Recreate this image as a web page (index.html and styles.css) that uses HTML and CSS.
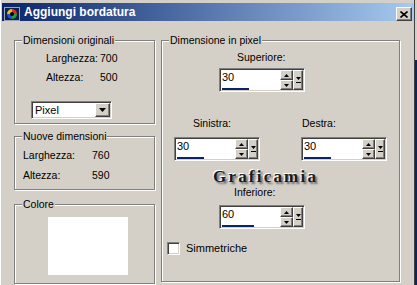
FILE: index.html
```html
<!DOCTYPE html>
<html lang="it">
<head>
  <meta charset="UTF-8">
  <title>Aggiungi bordatura</title>
  <link rel="stylesheet" href="styles.css">
</head>
<body>
  <div class="window">
    <div class="titlebar">
      <svg class="app-icon" width="16" height="14" viewBox="0 0 16 14">
        <rect x="0.5" y="0.5" width="15" height="13" fill="#10204a" stroke="#9aa4b8"/>
        <path d="M8 7 L8 2 A5 5 0 0 1 13 7 Z" fill="#e03020"/>
        <path d="M8 7 L13 7 A5 5 0 0 1 8 12 Z" fill="#20a040"/>
        <path d="M8 7 L8 12 A5 5 0 0 1 3 7 Z" fill="#2050e0"/>
        <path d="M8 7 L3 7 A5 5 0 0 1 8 2 Z" fill="#e0c020"/>
        <circle cx="8" cy="7" r="2" fill="#000"/>
      </svg>
      <span class="title">Aggiungi bordatura</span>
      <span class="close">
        <svg width="8" height="7" viewBox="0 0 8 7"><path d="M0.5 0.5 L7.5 6.5 M7.5 0.5 L0.5 6.5" stroke="#000" stroke-width="1.6"/></svg>
      </span>
    </div>

    <div class="content">
      <div class="col-left">
        <div class="group g-orig">
          <span class="legend">Dimensioni originali</span>
          <div class="dims dims-orig">
            <span>Larghezza:</span><span>700</span>
            <span>Altezza:</span><span>500</span>
          </div>
          <div class="select">
            <span class="select-text">Pixel</span>
            <span class="select-btn">
              <svg width="7" height="4" viewBox="0 0 7 4"><path d="M0 0 H7 L3.5 4 Z" fill="#000"/></svg>
            </span>
          </div>
        </div>

        <div class="group g-new">
          <span class="legend">Nuove dimensioni</span>
          <div class="dims dims-new">
            <span>Larghezza:</span><span>760</span>
            <span>Altezza:</span><span>590</span>
          </div>
        </div>

        <div class="group g-color">
          <span class="legend">Colore</span>
          <div class="swatch"></div>
        </div>
      </div>

      <div class="group g-pixel">
        <span class="legend">Dimensione in pixel</span>

        <div class="spin-block sb-top">
          <span class="spin-label">Superiore:</span>
          <div class="spin">
            <div class="spin-field">
              <span class="spin-value">30</span>
              <div class="spin-bar" style="width: 27px"></div>
            </div>
            <div class="spin-arrows">
              <span class="arrow-btn"><svg width="5" height="3" viewBox="0 0 5 3"><path d="M2.5 0 L5 3 H0 Z" fill="#000"/></svg></span>
              <span class="arrow-btn"><svg width="5" height="3" viewBox="0 0 5 3"><path d="M0 0 H5 L2.5 3 Z" fill="#000"/></svg></span>
            </div>
            <span class="more-btn"><svg width="5" height="6" viewBox="0 0 5 6"><path d="M0 0 H5 L2.5 3 Z M0 5 H5 V6 H0 Z" fill="#000"/></svg></span>
          </div>
        </div>

        <div class="spin-row">
          <div class="spin-block sb-left">
            <span class="spin-label">Sinistra:</span>
            <div class="spin">
              <div class="spin-field">
                <span class="spin-value">30</span>
                <div class="spin-bar" style="width: 27px"></div>
              </div>
              <div class="spin-arrows">
                <span class="arrow-btn"><svg width="5" height="3" viewBox="0 0 5 3"><path d="M2.5 0 L5 3 H0 Z" fill="#000"/></svg></span>
                <span class="arrow-btn"><svg width="5" height="3" viewBox="0 0 5 3"><path d="M0 0 H5 L2.5 3 Z" fill="#000"/></svg></span>
              </div>
              <span class="more-btn"><svg width="5" height="6" viewBox="0 0 5 6"><path d="M0 0 H5 L2.5 3 Z M0 5 H5 V6 H0 Z" fill="#000"/></svg></span>
            </div>
          </div>
          <div class="spin-block sb-right">
            <span class="spin-label">Destra:</span>
            <div class="spin">
              <div class="spin-field">
                <span class="spin-value">30</span>
                <div class="spin-bar" style="width: 27px"></div>
              </div>
              <div class="spin-arrows">
                <span class="arrow-btn"><svg width="5" height="3" viewBox="0 0 5 3"><path d="M2.5 0 L5 3 H0 Z" fill="#000"/></svg></span>
                <span class="arrow-btn"><svg width="5" height="3" viewBox="0 0 5 3"><path d="M0 0 H5 L2.5 3 Z" fill="#000"/></svg></span>
              </div>
              <span class="more-btn"><svg width="5" height="6" viewBox="0 0 5 6"><path d="M0 0 H5 L2.5 3 Z M0 5 H5 V6 H0 Z" fill="#000"/></svg></span>
            </div>
          </div>
        </div>

        <div class="watermark">Graficamia</div>

        <div class="spin-block sb-bottom">
          <span class="spin-label">Inferiore:</span>
          <div class="spin">
            <div class="spin-field">
              <span class="spin-value">60</span>
              <div class="spin-bar" style="width: 32px"></div>
            </div>
            <div class="spin-arrows">
              <span class="arrow-btn"><svg width="5" height="3" viewBox="0 0 5 3"><path d="M2.5 0 L5 3 H0 Z" fill="#000"/></svg></span>
              <span class="arrow-btn"><svg width="5" height="3" viewBox="0 0 5 3"><path d="M0 0 H5 L2.5 3 Z" fill="#000"/></svg></span>
            </div>
            <span class="more-btn"><svg width="5" height="6" viewBox="0 0 5 6"><path d="M0 0 H5 L2.5 3 Z M0 5 H5 V6 H0 Z" fill="#000"/></svg></span>
          </div>
        </div>

        <label class="check-row">
          <span class="checkbox"></span>
          <span>Simmetriche</span>
        </label>
      </div>
    </div>
  </div>
</body>
</html>
```

FILE: styles.css
```css
body {
  margin: 0;
  width: 417px;
  height: 285px;
  overflow: hidden;
  font-family: "Liberation Sans", Arial, sans-serif;
  font-size: 10.5px;
  color: #000;
  background: linear-gradient(to bottom, #d4d0c8 60px, #0a246a 60px);
}
.window {
  box-sizing: border-box;
  width: 415px;
  height: 285px;
  padding-top: 3px;
  background-color: #d4d0c8;
  border-left: 1px solid #fff;
  border-right: 1px solid #404040;
}
.titlebar {
  height: 18px;
  margin-left: 1px;
  display: flex;
  align-items: center;
  background: linear-gradient(to right, #0a246a, #a6caf0);
  color: #fff;
}
.app-icon {
  margin-left: 2px;
  margin-top: 3px;
}
.title {
  margin-left: 4px;
  font-weight: bold;
  font-size: 12px;
  flex-grow: 1;
}
.close {
  box-sizing: border-box;
  width: 16px;
  height: 14px;
  margin-right: 2px;
  margin-top: 4px;
  display: flex;
  align-items: center;
  justify-content: center;
  background-color: #d4d0c8;
  border: 1px solid;
  border-color: #fff #404040 #404040 #fff;
  box-shadow: inset -1px -1px 0 #808080;
}

.content {
  display: flex;
  align-items: flex-start;
  gap: 6px;
  padding: 19px 0 0 13px;
}
.col-left {
  width: 141px;
}
.group {
  position: relative;
  box-sizing: border-box;
  border: 1px solid #808080;
  box-shadow: 1px 1px 0 #fff, inset 1px 1px 0 #fff;
}
.legend {
  position: absolute;
  top: -7px;
  left: 7px;
  padding: 0 1px;
  line-height: 13px;
  background-color: #d4d0c8;
}
.g-orig {
  height: 84px;
}
.g-new {
  height: 54px;
  margin-top: 12px;
}
.g-color {
  height: 80px;
  margin-top: 14px;
}
.g-pixel {
  width: 239px;
  height: 242px;
}

.dims {
  display: grid;
  line-height: 14px;
}
.dims-orig {
  grid-template-columns: 54px auto;
  row-gap: 5px;
  margin: 10px 0 0 31px;
}
.dims-new {
  grid-template-columns: 69px auto;
  row-gap: 6px;
  margin: 11px 0 0 8px;
}

.select {
  box-sizing: border-box;
  width: 81px;
  height: 18px;
  margin: 17px 0 0 16px;
  padding: 1px;
  display: flex;
  background-color: #fff;
  border: 1px solid;
  border-color: #808080 #fff #fff #808080;
  box-shadow: inset 1px 1px 0 #404040, inset -1px -1px 0 #d4d0c8;
}
.select-text {
  flex-grow: 1;
  padding-left: 2px;
  font-size: 11px;
  line-height: 14px;
}
.select-btn,
.arrow-btn,
.more-btn {
  box-sizing: border-box;
  display: flex;
  align-items: center;
  justify-content: center;
  background-color: #d4d0c8;
  border: 1px solid;
  border-color: #fff #404040 #404040 #fff;
  box-shadow: inset -1px -1px 0 #808080;
}
.select-btn {
  width: 15px;
  height: 14px;
}

.swatch {
  width: 80px;
  height: 58px;
  margin: 12px 0 0 33px;
  background-color: #fff;
}

.spin-block {
  display: flex;
  flex-direction: column;
  align-items: flex-start;
  width: 86px;
}
.spin-label {
  line-height: 14px;
}
.sb-top {
  margin: 9px 0 0 57px;
}
.sb-top .spin-label {
  margin-left: 18px;
}
.sb-top .spin {
  margin-top: 4px;
}
.spin-row {
  display: flex;
  gap: 41px;
  margin: 24px 0 0 12px;
}
.sb-left .spin-label {
  margin-left: 19px;
}
.sb-right .spin-label {
  margin-left: 1px;
}
.spin-row .spin {
  margin-top: 7px;
}
.sb-bottom {
  margin-left: 57px;
}
.sb-bottom .spin-label {
  margin-left: 15px;
}
.sb-bottom .spin {
  margin-top: 6px;
}

.spin {
  box-sizing: border-box;
  width: 86px;
  height: 24px;
  padding: 1px;
  display: flex;
  background-color: #fff;
  border: 1px solid;
  border-color: #808080 #fff #fff #808080;
  box-shadow: inset 1px 1px 0 #404040, inset -1px -1px 0 #d4d0c8;
}
.spin-field {
  flex-grow: 1;
  padding-left: 1px;
  display: flex;
  flex-direction: column;
  align-items: flex-start;
}
.spin-value {
  font-size: 11px;
  line-height: 14px;
}
.spin-bar {
  height: 2px;
  margin-top: 4px;
  background-color: #0a246a;
}
.spin-arrows {
  display: flex;
  flex-direction: column;
  width: 13px;
}
.arrow-btn {
  height: 10px;
}
.more-btn {
  width: 10px;
  height: 20px;
}

.watermark {
  margin: 8px 0 0 51px;
  font-family: "Liberation Serif", "Times New Roman", serif;
  font-weight: bold;
  font-size: 17px;
  line-height: 16px;
  letter-spacing: 2.2px;
  color: #1a1a1a;
  text-shadow: -1px -1px 0 #fff, 2px 2px 2px #6a6a6a;
}

.check-row {
  display: flex;
  align-items: center;
  gap: 6px;
  margin: 13px 0 0 5px;
  line-height: 13px;
  font-size: 11px;
}
.checkbox {
  box-sizing: border-box;
  width: 13px;
  height: 13px;
  background-color: #fff;
  border: 1px solid;
  border-color: #808080 #fff #fff #808080;
  box-shadow: inset 1px 1px 0 #404040, inset -1px -1px 0 #d4d0c8;
}
```
